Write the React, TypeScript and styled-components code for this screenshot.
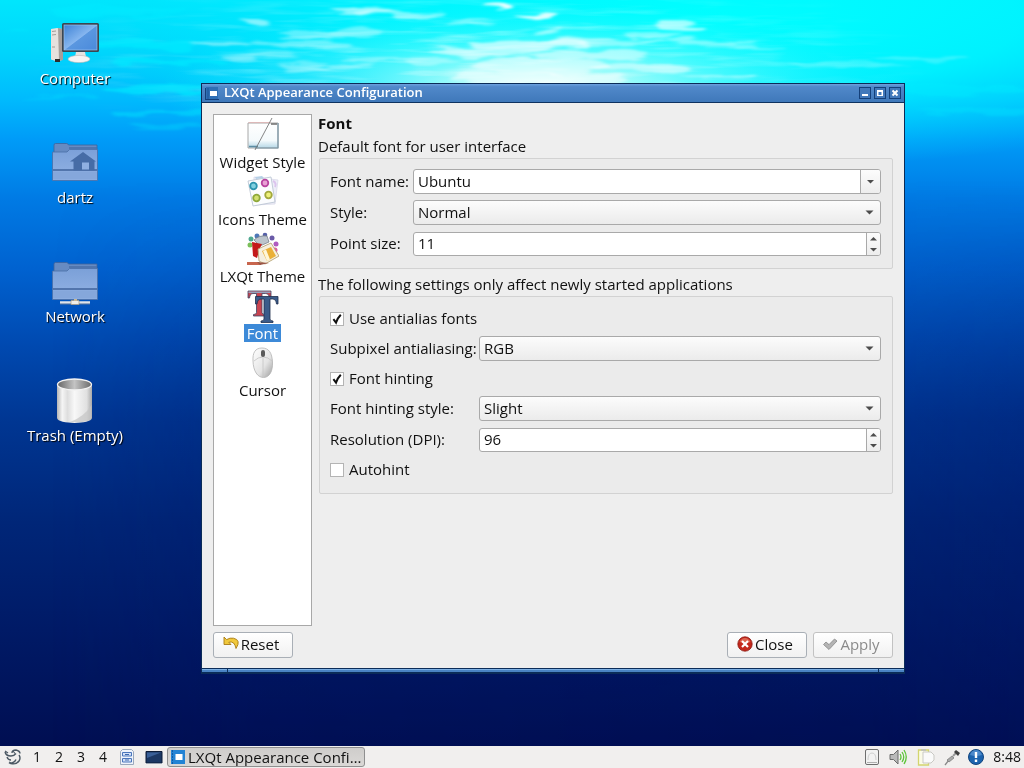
import React, { useId, useState } from "react";
import styled, { createGlobalStyle, css } from "styled-components";

const GlobalStyle = createGlobalStyle`
  * { box-sizing: border-box; }
  html, body { margin: 0; padding: 0; }
  body, button, input, select {
    font-family: "Open Sans", "Noto Sans", sans-serif;
    font-size: 15px;
    line-height: 20px;
    color: #111;
  }
  button, input, select { margin: 0; }
`;

const Desktop = styled.div`
  position: relative;
  display: flex;
  flex-direction: column;
  min-height: 100vh;
  overflow: hidden;
  background: #001058;
`;

const WallpaperArt = styled.svg`
  position: absolute;
  inset: 0;
  width: 100%;
  height: 100%;
`;

const Workspace = styled.main`
  position: relative;
  flex: 1;
`;

/* Desktop shortcuts */

const Shortcuts = styled.nav`
  display: flex;
  flex-direction: column;
  align-items: center;
  width: 150px;
  padding-top: 18px;
  gap: 46px;
`;

const Shortcut = styled.a`
  display: flex;
  flex-direction: column;
  align-items: center;
  color: #fff;
  text-decoration: none;
  text-shadow: 1px 1px 1px #000;
  white-space: nowrap;
  height: 73px;
`;

const ShortcutArt = styled.svg`
  width: 50px;
  height: 50px;
`;

/* Window frame */

const Window = styled.section`
  position: absolute;
  left: 201px;
  right: 119px;
  top: 83px;
  bottom: 72px;
  display: flex;
  flex-direction: column;
  border: 1px solid #0b2c58;
  background: #eeeeee;
`;

const TitleBar = styled.header`
  display: flex;
  align-items: center;
  gap: 3px;
  height: 19px;
  padding: 0 3px;
  border-bottom: 1px solid #0e3260;
  background: linear-gradient(#6ba1de, #5189ca 15%, #3f78ba);
`;

const TitleText = styled.h1`
  flex: 1;
  margin: 0;
  padding: 0 0 2px 1px;
  font-size: 13px;
  line-height: 16px;
  font-weight: 600;
  color: #fff;
`;

const SystemMenu = styled.button`
  display: flex;
  width: 15px;
  height: 13px;
  padding: 0;
  border: 0;
  background: none;
`;

const FrameButton = styled.button`
  display: flex;
  width: 12px;
  height: 12px;
  padding: 0;
  border: 1px solid #14407a;
  background: #4279bb;
`;

const FrameGrip = styled.div`
  display: grid;
  grid-template-columns: 25px 1fr 25px;
  gap: 1px;
  height: 5px;
  padding-bottom: 1px;
  border-top: 1px solid #0b2c58;
  background: #0b2c58;
`;

const GripPart = styled.span`
  border-top: 1px solid #7db0e4;
  background: #4a83c4;
`;

const WindowBody = styled.div`
  flex: 1;
  display: flex;
  flex-direction: column;
  gap: 6px;
  padding: 11px 11px 10px 11px;
`;

const Columns = styled.div`
  flex: 1;
  display: flex;
  gap: 6px;
`;

/* Page list */

const PageList = styled.nav`
  display: flex;
  flex-direction: column;
  gap: 1px;
  width: 99px;
  padding-top: 3px;
  border: 1px solid #a8a8a8;
  background: #fff;
`;

const PageItem = styled.button`
  display: flex;
  flex-direction: column;
  align-items: center;
  gap: 1px;
  height: 56px;
  padding: 0;
  border: 0;
  background: none;
  white-space: nowrap;
`;

const PageArt = styled.svg`
  width: 32px;
  height: 34px;
`;

const PageLabel = styled.span<{ $current?: boolean }>`
  padding: 0 3px;
  line-height: 18px;
  font-size: 15px;
  ${({ $current }) =>
    $current &&
    css`
      background: #3d8ad8;
      color: #fff;
    `}
`;

/* Settings form */

const Settings = styled.form`
  flex: 1;
  min-width: 0;
`;

const PageTitle = styled.h2`
  margin: 0 0 5px;
  font-size: 15px;
  line-height: 18px;
  font-weight: 700;
`;

const Fieldset = styled.fieldset`
  min-width: 0;
  margin: 0 0 6px;
  padding: 0;
  border: 0;
`;

const GroupTitle = styled.legend`
  padding: 0 0 2px;
  line-height: 18px;
`;

const GroupBox = styled.div<{ $labelWidth: number }>`
  display: grid;
  grid-template-columns: ${({ $labelWidth }) => $labelWidth}px 1fr;
  align-items: center;
  row-gap: 6px;
  margin: 1px 0 0 1px;
  padding: 10px 11px 12px 10px;
  border: 1px solid #d2d2d2;
  border-radius: 2px;
  background: #ebebeb;
`;

const FieldLabel = styled.label`
  padding-bottom: 2px;
  white-space: nowrap;
`;

const FieldFrame = styled.div<{ $kind: "choice" | "combo" | "spin" }>`
  position: relative;
  display: flex;
  height: ${({ $kind }) => ($kind === "spin" ? 24 : 25)}px;
  margin-top: ${({ $kind }) => ($kind === "spin" ? 1 : 0)}px;
  min-width: 0;
  border: 1px solid #a9a9a9;
  border-radius: 3px;
  overflow: hidden;
  background: ${({ $kind }) => ($kind === "choice" ? "linear-gradient(#fcfcfc, #ebebeb)" : "#fff")};
`;

const TextInput = styled.input`
  flex: 1;
  min-width: 0;
  padding: 0 4px 2px;
  border: 0;
  outline: 0;
  background: none;
`;

const Choice = styled.select`
  flex: 1;
  appearance: none;
  padding: 0 4px 2px;
  border: 0;
  outline: 0;
  background: none;
`;

const ChoiceArrow = styled.svg`
  position: absolute;
  right: 6px;
  top: 9px;
  width: 9px;
  height: 5px;
  pointer-events: none;
`;

const DropButton = styled.button`
  display: flex;
  align-items: center;
  justify-content: center;
  width: 20px;
  padding: 0;
  border: 0;
  border-left: 1px solid #a9a9a9;
  background: linear-gradient(#fcfcfc, #ededed);
`;

const Steps = styled.div`
  display: flex;
  flex-direction: column;
  width: 14px;
  border-left: 1px solid #a9a9a9;
  background: linear-gradient(#fcfcfc, #ededed);
`;

const StepButton = styled.button`
  flex: 1;
  display: flex;
  align-items: center;
  justify-content: center;
  padding: 0;
  border: 0;
  background: none;
`;

const ArrowArt = styled.svg`
  width: 9px;
  height: 5px;
`;

const CheckRow = styled.label`
  grid-column: 1 / -1;
  display: flex;
  align-items: center;
  gap: 5px;
  height: 23px;
`;

const CheckText = styled.span`
  padding-bottom: 2px;
`;

const CheckBox = styled.span`
  position: relative;
  display: flex;
`;

const CheckInput = styled.input`
  appearance: none;
  width: 14px;
  height: 14px;
  border: 1px solid #b4b4b4;
  background: #fff;
`;

const CheckMark = styled.svg`
  position: absolute;
  inset: 0;
  width: 14px;
  height: 14px;
  pointer-events: none;
`;

/* Dialog buttons */

const ButtonRow = styled.footer`
  display: flex;
  justify-content: space-between;
`;

const ButtonGroup = styled.div`
  display: flex;
  gap: 6px;
`;

const PushButton = styled.button`
  display: flex;
  align-items: center;
  justify-content: center;
  gap: 2px;
  width: 80px;
  height: 26px;
  padding: 0 4px 2px 0;
  border: 1px solid #a9afb6;
  border-radius: 3px;
  background: linear-gradient(#ffffff, #f1f1f1);
  &:disabled {
    border-color: #c2c2c2;
    color: #8b8b8b;
  }
`;

const ButtonArt = styled.svg`
  width: 16px;
  height: 16px;
`;

/* Panel */

const Panel = styled.footer`
  position: relative;
  display: flex;
  align-items: center;
  height: 22px;
  padding-right: 3px;
  background: #f1efee;
`;

const PanelButton = styled.button<{ $width: number }>`
  display: flex;
  align-items: center;
  justify-content: center;
  width: ${({ $width }) => $width}px;
  height: 22px;
  padding: 0;
  border: 0;
  background: none;
`;

const PanelDigit = styled.span`
  font-size: 14px;
`;

const PanelArt = styled.svg`
  width: 18px;
  height: 18px;
`;

const TaskButton = styled.button`
  display: flex;
  align-items: center;
  gap: 2px;
  width: 198px;
  height: 20px;
  padding: 0 2px;
  border: 1px solid #8f8f8f;
  border-radius: 3px;
  background: linear-gradient(#cfcdcb, #dad8d6);
  overflow: hidden;
`;

const TaskText = styled.span`
  white-space: nowrap;
`;

const Tray = styled.div`
  display: flex;
  align-items: center;
  margin-left: auto;
`;

const Clock = styled.time`
  padding-left: 3px;
  font-size: 14px;
`;

/* Small glyphs */

const DownArrow = () => (
  <ArrowArt viewBox="0 0 9 5" aria-hidden="true">
    <path d="M1 1h7L4.500 4.500z" fill="#4c4c4c" />
  </ArrowArt>
);

const UpArrow = () => (
  <ArrowArt viewBox="0 0 9 5" aria-hidden="true">
    <path d="M1 4.500h7L4.500 1z" fill="#4c4c4c" />
  </ArrowArt>
);

/* Form controls */

function SelectField({ label, options }: { label: string; options: string[] }) {
  const id = useId();
  return (
    <>
      <FieldLabel htmlFor={id}>{label}</FieldLabel>
      <FieldFrame $kind="choice">
        <Choice id={id} defaultValue={options[0]}>
          {options.map((o) => (
            <option key={o}>{o}</option>
          ))}
        </Choice>
        <ChoiceArrow viewBox="0 0 9 5" aria-hidden="true">
          <path d="M0.500 0.500h8L4.500 4.500z" fill="#4c4c4c" />
        </ChoiceArrow>
      </FieldFrame>
    </>
  );
}

function SpinField({ label, initial }: { label: string; initial: number }) {
  const id = useId();
  const [value, setValue] = useState(initial);
  return (
    <>
      <FieldLabel htmlFor={id}>{label}</FieldLabel>
      <FieldFrame $kind="spin">
        <TextInput
          id={id}
          inputMode="numeric"
          value={value}
          onChange={(e) => setValue(Number(e.target.value) || 0)}
        />
        <Steps>
          <StepButton type="button" aria-label={`Increase ${label}`} onClick={() => setValue(value + 1)}>
            <UpArrow />
          </StepButton>
          <StepButton type="button" aria-label={`Decrease ${label}`} onClick={() => setValue(value - 1)}>
            <DownArrow />
          </StepButton>
        </Steps>
      </FieldFrame>
    </>
  );
}

function ComboField({ label, initial }: { label: string; initial: string }) {
  const id = useId();
  return (
    <>
      <FieldLabel htmlFor={id}>{label}</FieldLabel>
      <FieldFrame $kind="combo">
        <TextInput id={id} defaultValue={initial} />
        <DropButton type="button" aria-label="Choose font">
          <DownArrow />
        </DropButton>
      </FieldFrame>
    </>
  );
}

function CheckField({ label, initial }: { label: string; initial?: boolean }) {
  const [on, setOn] = useState(!!initial);
  return (
    <CheckRow>
      <CheckBox>
        <CheckInput type="checkbox" checked={on} onChange={() => setOn(!on)} />
        {on && (
          <CheckMark viewBox="0 0 14 14">
            <path d="M3.4 7.2 6 10.6Q7.6 6 10.8 2.8" fill="none" stroke="#111" strokeWidth="2" />
          </CheckMark>
        )}
      </CheckBox>
      <CheckText>{label}</CheckText>
    </CheckRow>
  );
}

/* Drawings */

const streaks: [number, number, number, number, number][] = [
  [497, 5, 14, 2.5, 0.9], [536, 15, 22, 3, 0.85], [366, 12, 30, 3, 0.5], [400, 14, 46, 3, 0.45],
  [345, 9, 14, 2, 0.5], [256, 22, 14, 2, 0.5], [680, 27, 24, 2.5, 0.6], [548, 32, 18, 2, 0.5],
  [470, 24, 26, 2, 0.35], [330, 34, 55, 4, 0.35], [300, 43, 50, 3, 0.35], [222, 45, 30, 3, 0.35],
  [600, 42, 50, 4, 0.4], [655, 35, 30, 3, 0.4], [700, 42, 60, 2.5, 0.4], [745, 47, 40, 2, 0.35],
  [530, 45, 60, 5, 0.6], [480, 52, 50, 4, 0.5], [590, 55, 60, 4, 0.5], [400, 60, 60, 3, 0.35],
  [330, 67, 50, 3, 0.3], [260, 56, 40, 3, 0.3], [720, 77, 40, 2, 0.45], [640, 68, 50, 4, 0.45],
  [540, 66, 70, 8, 0.5], [540, 79, 90, 7, 0.5], [850, 65, 60, 2, 0.2], [920, 58, 50, 2, 0.2],
];

const cyanStreaks: [number, number, number, number, number][] = [
  [170, 62, 60, 3, 0.6], [150, 44, 60, 4, 0.6], [160, 88, 60, 4, 0.6], [60, 98, 40, 2, 0.25],
  [160, 112, 50, 3, 0.4], [170, 126, 40, 2, 0.3], [20, 33, 14, 1, 0.5], [950, 90, 80, 5, 0.4],
  [980, 112, 60, 4, 0.3], [120, 12, 70, 5, 0.5], [80, 76, 40, 2, 0.3],
];

const Wallpaper = () => (
  <WallpaperArt viewBox="0 0 1024 768" preserveAspectRatio="none" aria-hidden="true">
    <defs>
      <linearGradient id="sea" x1="0" y1="0" x2="0" y2="1">
        <stop offset="0" stopColor="#00e6fd" />
        <stop offset="0.07" stopColor="#00d4fc" />
        <stop offset="0.13" stopColor="#00bafd" />
        <stop offset="0.18" stopColor="#009cf8" />
        <stop offset="0.26" stopColor="#007ae4" />
        <stop offset="0.35" stopColor="#0062d0" />
        <stop offset="0.45" stopColor="#0049b0" />
        <stop offset="0.55" stopColor="#003692" />
        <stop offset="0.68" stopColor="#002678" />
        <stop offset="0.82" stopColor="#001a66" />
        <stop offset="1" stopColor="#000c4e" />
      </linearGradient>
      <radialGradient id="glow" gradientUnits="userSpaceOnUse" cx="0" cy="0" r="1" gradientTransform="translate(540 88) scale(380 88)">
        <stop offset="0" stopColor="#f0fffc" />
        <stop offset="0.2" stopColor="#c0fefa" stopOpacity="0.9" />
        <stop offset="0.5" stopColor="#70fdfd" stopOpacity="0.6" />
        <stop offset="1" stopColor="#00f4ff" stopOpacity="0" />
      </radialGradient>
      <radialGradient id="cyan" gradientUnits="userSpaceOnUse" cx="0" cy="0" r="1" gradientTransform="translate(700 20) scale(640 150)">
        <stop offset="0" stopColor="#00ffff" />
        <stop offset="0.5" stopColor="#00f8ff" stopOpacity="0.8" />
        <stop offset="1" stopColor="#00e0ff" stopOpacity="0" />
      </radialGradient>
      <radialGradient id="rippleFade" gradientUnits="userSpaceOnUse" cx="0" cy="0" r="1" gradientTransform="translate(480 60) scale(460 90)">
        <stop offset="0" stopColor="#fff" />
        <stop offset="0.5" stopColor="#888" />
        <stop offset="1" stopColor="#000" />
      </radialGradient>
      <linearGradient id="shade" x1="0" y1="0" x2="0" y2="1">
        <stop offset="0" stopColor="#001060" stopOpacity="0" />
        <stop offset="0.4" stopColor="#001060" stopOpacity="0.4" />
        <stop offset="1" stopColor="#001060" stopOpacity="0.3" />
      </linearGradient>
      <linearGradient id="shadeAcross" x1="0" y1="0" x2="1" y2="0">
        <stop offset="0.05" stopColor="#000" />
        <stop offset="0.25" stopColor="#999" />
        <stop offset="0.85" stopColor="#666" />
        <stop offset="1" stopColor="#bbb" />
      </linearGradient>
      <filter id="soft" x="-20%" y="-100%" width="140%" height="300%">
        <feTurbulence type="fractalNoise" baseFrequency="0.02 0.12" numOctaves="2" seed="4" result="n" />
        <feDisplacementMap in="SourceGraphic" in2="n" scale="16" result="d" />
        <feGaussianBlur in="d" stdDeviation="2 0.8" />
      </filter>
      <filter id="ripples" x="0" y="0" width="100%" height="100%">
        <feTurbulence type="fractalNoise" baseFrequency="0.014 0.13" numOctaves="3" seed="11" />
        <feColorMatrix values="0 0 0 0 0.85  0 0 0 0 1  0 0 0 0 1  2.6 0 0 0 -1.2" />
      </filter>
      <mask id="rippleMask">
        <rect width="1024" height="160" fill="url(#rippleFade)" />
      </mask>
      <mask id="shadeMask">
        <rect width="1024" height="768" fill="url(#shadeAcross)" />
      </mask>
    </defs>
    <rect width="1024" height="768" fill="url(#sea)" />
    <g mask="url(#shadeMask)">
      <rect y="180" width="1024" height="588" fill="url(#shade)" />
    </g>
    <rect width="1024" height="200" fill="url(#cyan)" />
    <rect width="1024" height="220" fill="url(#glow)" />
    <g mask="url(#rippleMask)">
      <rect width="1024" height="160" filter="url(#ripples)" opacity="0.5" />
    </g>
    <g fill="#00ecff" filter="url(#soft)">
      {cyanStreaks.map(([x, y, rx, ry, o]) => (
        <ellipse key={`${x}-${y}`} cx={x} cy={y} rx={rx} ry={ry} opacity={o} />
      ))}
    </g>
    <g fill="#fff" filter="url(#soft)">
      {streaks.map(([x, y, rx, ry, o]) => (
        <ellipse key={`${x}-${y}`} cx={x} cy={y} rx={rx} ry={ry} opacity={o} />
      ))}
    </g>
  </WallpaperArt>
);

const ComputerIcon = () => (
  <ShortcutArt viewBox="0 0 50 50" aria-hidden="true">
    <defs>
      <linearGradient id="screen" x1="0" y1="0" x2="1" y2="1">
        <stop offset="0" stopColor="#3f83d6" />
        <stop offset="0.5" stopColor="#86b6ef" />
        <stop offset="0.52" stopColor="#5a97e0" />
        <stop offset="1" stopColor="#4a8adb" />
      </linearGradient>
    </defs>
    <path d="M1 11 7 10l5 1v31l-5 1.500-6-2z" fill="#e6e1de" />
    <path d="M8 10l1 33 4-1V11z" fill="#a79f9b" />
    <path d="M2 13.500l4-.5M2 17l4-.5M2 29h3" stroke="#a39c98" strokeWidth="1" />
    <path d="M5 41h5v3H5z" fill="#2e2b2b" />
    <path d="M26 34h9l1 5H25z" fill="#e6e3e1" />
    <ellipse cx="29" cy="41" rx="11" ry="3.600" fill="#f6f4f3" stroke="#c2b9b5" strokeWidth="0.6" />
    <rect x="12" y="5" width="37" height="29" rx="1.500" fill="#3a4753" />
    <rect x="14" y="7" width="33" height="25" fill="url(#screen)" stroke="#a5c8f0" strokeWidth="0.6" />
  </ShortcutArt>
);

const FolderShape = ({ children }: { children: React.ReactNode }) => (
  <ShortcutArt viewBox="0 0 50 50" aria-hidden="true">
    <defs>
      <linearGradient id="folder" x1="0" y1="0" x2="0" y2="1">
        <stop offset="0" stopColor="#7ba0d8" />
        <stop offset="1" stopColor="#93b3e4" />
      </linearGradient>
    </defs>
    <path d="M4 8q0-1.500 1.500-1.500h11q1.500 0 2 1.500H47v8H4z" fill="#668bc2" stroke="#3f639b" strokeWidth="0.8" />
    <path d="M19 11h28" stroke="#4a6ea6" strokeWidth="1.500" />
    <path d="M2.500 15H17l2.500-2.500H47.500v31H2.500z" fill="url(#folder)" stroke="#4a6ea6" strokeWidth="0.8" />
    <path d="M3 33h44" stroke="#3f639b" strokeWidth="1.300" />
    <path d="M3 34.500h44v8H3z" fill="#85a7db" />
    {children}
  </ShortcutArt>
);

const HomeFolderIcon = () => (
  <FolderShape>
    <path d="M33 15 20 24.500h3.500V33.500h21v-9H46z" fill="#466ca6" />
    <path d="M32 25.500h7v7h-7z" fill="#8fb0e2" />
  </FolderShape>
);

const NetworkFolderIcon = () => (
  <FolderShape>
    <path d="M10 46.500h30" stroke="#dfe4ea" strokeWidth="2.500" />
    <path d="M10 48h30" stroke="#6f7e94" strokeWidth="0.8" />
    <path d="M21 44.500h8v4h-8z" fill="#f0eeea" stroke="#a79a80" strokeWidth="0.7" />
    <path d="M24 43h3v2h-3z" fill="#c9b894" />
  </FolderShape>
);

const TrashIcon = () => (
  <ShortcutArt viewBox="0 0 50 50" aria-hidden="true">
    <defs>
      <linearGradient id="can" x1="0" y1="0" x2="1" y2="0">
        <stop offset="0" stopColor="#b5b5b5" />
        <stop offset="0.15" stopColor="#f5f5f5" />
        <stop offset="0.3" stopColor="#dedede" />
        <stop offset="0.5" stopColor="#f8f8f8" />
        <stop offset="0.85" stopColor="#e0e0e0" />
        <stop offset="1" stopColor="#a9a9a9" />
      </linearGradient>
      <linearGradient id="canInside" x1="0" y1="0" x2="1" y2="0">
        <stop offset="0" stopColor="#666" />
        <stop offset="0.5" stopColor="#c4c4c4" />
        <stop offset="1" stopColor="#6a6a6a" />
      </linearGradient>
    </defs>
    <path d="M7 9v34c1 6.500 34 6.500 35 0V9z" fill="url(#can)" />
    <path d="M20 47Q34 42 41.500 30v13c-1 3-9 5-21.500 4z" fill="#c4c4c4" opacity="0.7" />
    <ellipse cx="24.500" cy="9.500" rx="17" ry="5.500" fill="url(#canInside)" stroke="#f2f2f2" strokeWidth="1.300" />
  </ShortcutArt>
);

const WidgetStyleIcon = () => (
  <PageArt viewBox="0 0 32 34">
    <defs>
      <linearGradient id="pane" x1="0" y1="0" x2="0" y2="1">
        <stop offset="0" stopColor="#ffffff" />
        <stop offset="0.7" stopColor="#f4fafc" />
        <stop offset="1" stopColor="#b5d7e6" />
      </linearGradient>
    </defs>
    <path d="M1 5h30v25H1z" fill="url(#pane)" stroke="#a8a8a8" />
    <path d="M31 5v25H8" fill="none" stroke="#7896a6" strokeWidth="1.200" />
    <path d="M1.500 4.500h22" stroke="#dcb8b8" />
    <path d="M24 6h6" stroke="#6d6d6d" strokeWidth="1.500" />
    <path d="M2 28.500h9" stroke="#5c8da4" strokeWidth="1.500" />
    <path d="M25 0 8 32" stroke="#777" strokeWidth="0.9" />
  </PageArt>
);

const IconsThemeIcon = () => (
  <PageArt viewBox="0 0 32 34">
    <path d="M7 2l24 3-3 24-21 1z" fill="#eeeef8" stroke="#d6d6e6" strokeWidth="0.7" />
    <path d="M1 6l23-4 4 25-22 4z" fill="#fbfcfe" stroke="#b5c0cf" strokeWidth="0.8" />
    <path d="M8 2l7-1 2 2-8 1z" fill="#b6d0e6" />
    <g strokeWidth="1.800">
      <circle cx="6.500" cy="11" r="3.300" fill="#7fd0e0" stroke="#2b93ae" />
      <circle cx="18" cy="8" r="3.300" fill="#e8a0d4" stroke="#b845a0" />
      <circle cx="9.500" cy="23" r="3.300" fill="#d2e070" stroke="#8ea83a" />
      <circle cx="21.500" cy="20" r="3.300" fill="#eef07a" stroke="#a2a83c" />
    </g>
    <path d="M26 6q4 2 2 6" fill="none" stroke="#dcc4ee" strokeWidth="2" />
  </PageArt>
);

const LxqtThemeIcon = () => (
  <PageArt viewBox="0 0 32 34">
    <circle cx="3" cy="13" r="2.500" fill="#7bbf5a" />
    <circle cx="4" cy="7" r="2.500" fill="#4fa890" />
    <circle cx="10" cy="4" r="2.500" fill="#4f78b8" />
    <circle cx="18" cy="3" r="2.300" fill="#5560a8" />
    <circle cx="25" cy="6" r="2.500" fill="#6a5aa8" />
    <circle cx="29" cy="12" r="2.500" fill="#b05ac0" />
    <circle cx="28" cy="18" r="2.500" fill="#e05aa0" />
    <path d="M7 8q5-5 13-4l2 6-9 4z" fill="#bcc4cc" stroke="#6d7680" strokeWidth="0.7" />
    <path d="M5 10l10 2-2 4-3 10-4-2z" fill="#c41a1a" />
    <path d="M0 30h12l2 3H0z" fill="#c8664e" />
    <path d="M11 17l13-6 8 13-14 8-6-3z" fill="#f5efe0" stroke="#b09a66" strokeWidth="0.8" />
    <path d="M15 19l9-4 5 9-9 5z" fill="#eab038" />
    <path d="M16 19l3-1.500 4 10-3 1.500z" fill="#fff6d8" />
    <path d="M10 30l12 1-9 2z" fill="#9a5544" />
  </PageArt>
);

const FontIcon = () => (
  <PageArt viewBox="0 0 32 34">
    <path
      d="M1 2h23v7h-1.500q-.5-4.500-4-4.500h-3.500v19q0 2 3 2v1.500H6.500v-1.500q3 0 3-2v-19H6q-3 0-3.500 4.500H1z"
      fill="#c84450"
      stroke="#3c4664"
      strokeWidth="0.8"
    />
    <path d="M1.500 2.500h22v1.500h-22z" fill="#98a2bc" />
    <path
      d="M8.500 7.500H31V15h-1.500q-.5-5-4-5H23v20q0 2 3 2v1.500H14v-1.500q3 0 3-2V10h-3q-3.500 0-4 5H8.500z"
      fill="#3b5c8a"
      stroke="#1e2e4c"
      strokeWidth="0.8"
    />
  </PageArt>
);

const CursorIcon = () => (
  <PageArt viewBox="0 0 32 34">
    <defs>
      <linearGradient id="mouse" x1="0" y1="0" x2="1" y2="1">
        <stop offset="0" stopColor="#ffffff" />
        <stop offset="0.6" stopColor="#e4e4e4" />
        <stop offset="1" stopColor="#9c9c9c" />
      </linearGradient>
    </defs>
    <path
      d="M15 2C8 2 5.500 7 6 15c.3 10 4.500 16.500 10.500 16.500S26 25 25.500 16C25 7 22 2 15 2z"
      fill="url(#mouse)"
      stroke="#b4b4b4"
      strokeWidth="0.8"
    />
    <path d="M7 15q4-4 9-4t9 4M16 12v19" fill="none" stroke="#c4c4c4" strokeWidth="0.8" />
    <rect x="14" y="4" width="4" height="7" rx="2" fill="#5a5a5a" />
  </PageArt>
);

const MenuArt = () => (
  <svg width="15" height="13" viewBox="0 0 15 13" aria-hidden="true">
    <path d="M1 0h12v12H1z" fill="#2f6fb5" />
    <path d="M0 12.500h14M0.500 1v11" stroke="#163f78" />
    <path d="M3 1v11" stroke="#1c5496" />
    <path d="M5 4h7v5H5z" fill="#fff" />
  </svg>
);

const pages = [
  { label: "Widget Style", Icon: WidgetStyleIcon },
  { label: "Icons Theme", Icon: IconsThemeIcon },
  { label: "LXQt Theme", Icon: LxqtThemeIcon },
  { label: "Font", Icon: FontIcon },
  { label: "Cursor", Icon: CursorIcon },
];

const shortcuts = [
  { label: "Computer", Icon: ComputerIcon },
  { label: "dartz", Icon: HomeFolderIcon },
  { label: "Network", Icon: NetworkFolderIcon },
  { label: "Trash (Empty)", Icon: TrashIcon },
];

export default function App() {
  const [page, setPage] = useState("Font");
  return (
    <Desktop>
      <GlobalStyle />
      <Wallpaper />
      <Workspace>
        <Shortcuts>
          {shortcuts.map(({ label, Icon }) => (
            <Shortcut key={label} href="#">
              <Icon />
              <span>{label}</span>
            </Shortcut>
          ))}
        </Shortcuts>

        <Window>
          <TitleBar>
            <SystemMenu aria-label="Window menu">
              <MenuArt />
            </SystemMenu>
            <TitleText>LXQt Appearance Configuration</TitleText>
            <FrameButton aria-label="Minimize">
              <svg width="10" height="10" viewBox="0 0 10 10">
                <path d="M2 7h6" stroke="#fff" strokeWidth="2" />
              </svg>
            </FrameButton>
            <FrameButton aria-label="Maximize">
              <svg width="10" height="10" viewBox="0 0 10 10">
                <path d="M2 2h6v6H2zM3.500 4v3h3V4z" fill="#fff" fillRule="evenodd" />
              </svg>
            </FrameButton>
            <FrameButton aria-label="Close window">
              <svg width="10" height="10" viewBox="0 0 10 10">
                <path d="M2.500 2.500l5 5M7.500 2.500l-5 5" stroke="#fff" strokeWidth="2" />
              </svg>
            </FrameButton>
          </TitleBar>

          <WindowBody>
            <Columns>
              <PageList>
                {pages.map(({ label, Icon }) => (
                  <PageItem key={label} onClick={() => setPage(label)}>
                    <Icon />
                    <PageLabel $current={label === page}>{label}</PageLabel>
                  </PageItem>
                ))}
              </PageList>

              <Settings onSubmit={(e) => e.preventDefault()}>
                <PageTitle>Font</PageTitle>
                <Fieldset>
                  <GroupTitle>Default font for user interface</GroupTitle>
                  <GroupBox $labelWidth={83}>
                    <ComboField label="Font name:" initial="Ubuntu" />
                    <SelectField label="Style:" options={["Normal", "Bold", "Italic"]} />
                    <SpinField label="Point size:" initial={11} />
                  </GroupBox>
                </Fieldset>
                <Fieldset>
                  <GroupTitle>The following settings only affect newly started applications</GroupTitle>
                  <GroupBox $labelWidth={149}>
                    <CheckField label="Use antialias fonts" initial />
                    <SelectField label="Subpixel antialiasing:" options={["RGB", "BGR", "None"]} />
                    <CheckField label="Font hinting" initial />
                    <SelectField label="Font hinting style:" options={["Slight", "Medium", "Full"]} />
                    <SpinField label="Resolution (DPI):" initial={96} />
                    <CheckField label="Autohint" />
                  </GroupBox>
                </Fieldset>
              </Settings>
            </Columns>

            <ButtonRow>
              <PushButton>
                <ButtonArt viewBox="0 0 16 16">
                  <path
                    d="M1 1v7.500h7L5.800 6.300Q11.500 4.500 13 12.500 18.500 4 10.500 2.200 7 1.500 3.600 3.600z"
                    fill="#f0c83c"
                    stroke="#a87c14"
                    strokeWidth="0.9"
                  />
                </ButtonArt>
                Reset
              </PushButton>
              <ButtonGroup>
                <PushButton>
                  <ButtonArt viewBox="0 0 16 16">
                    <circle cx="8" cy="8" r="7.200" fill="#c4281c" stroke="#8a1810" strokeWidth="0.8" />
                    <path d="M2.500 6q2-4 5.500-4t5.500 4q-5 2-11 0z" fill="#e8806a" opacity="0.7" />
                    <path d="M5 5l6 6M11 5l-6 6" stroke="#fff" strokeWidth="2.200" />
                  </ButtonArt>
                  Close
                </PushButton>
                <PushButton disabled>
                  <ButtonArt viewBox="0 0 16 16">
                    <path
                      d="M1.500 8.500 4 6l3 2.600L12.500 3 15 5l-8 8.500z"
                      fill="#b4b4b4"
                      stroke="#888"
                      strokeWidth="0.8"
                    />
                  </ButtonArt>
                  Apply
                </PushButton>
              </ButtonGroup>
            </ButtonRow>
          </WindowBody>

          <FrameGrip>
            <GripPart />
            <GripPart />
            <GripPart />
          </FrameGrip>
        </Window>
      </Workspace>

      <Panel>
        <PanelButton $width={26} aria-label="Main menu">
          <PanelArt viewBox="0 0 18 18">
            <path
              d="M1 4q1 4 6 4 3 0 5-2.500M8 5q0-3 4-3 4 1 4 3.500M15 7q2 3 0 6-3 4-8 2.500 4-1 5-4M3 9q1 3 4 3"
              fill="none"
              stroke="#4b5863"
              strokeWidth="1.400"
            />
            <path d="M1 3l3 2M5 14l3 1.500M9 3l2 2.500" stroke="#4b5863" strokeWidth="1.200" />
          </PanelArt>
        </PanelButton>
        {["1", "2", "3", "4"].map((n) => (
          <PanelButton key={n} $width={22} aria-label={`Desktop ${n}`}>
            <PanelDigit>{n}</PanelDigit>
          </PanelButton>
        ))}
        <PanelButton $width={26} aria-label="File manager">
          <PanelArt viewBox="0 0 18 18">
            <path d="M2.500 3.500l2-2h9l2 2v13h-13z" fill="#eef3fb" stroke="#9aa8bc" />
            <path d="M4.500 4.500h9V8h-9zM4.500 10.500h9V14h-9z" fill="#d3e1f7" stroke="#4a76bc" />
            <path d="M7 6.500h4M7 12h4" stroke="#3c68ae" />
          </PanelArt>
        </PanelButton>
        <PanelButton $width={27} aria-label="Show desktop">
          <PanelArt viewBox="0 0 18 18">
            <path d="M1 3.500h16v11.500H1z" fill="#1c3864" stroke="#0d1d38" />
            <path d="M2 4.500h14L2 10z" fill="#3a6098" />
            <path d="M1 15.500h16" stroke="#9aa3b0" />
          </PanelArt>
        </PanelButton>
        <TaskButton>
          <ButtonArt viewBox="0 0 16 16">
            <path d="M1 1h14v14H1z" fill="#2383d4" />
            <path d="M2.500 1v14" stroke="#0f5aa4" strokeDasharray="2 1" />
            <path d="M5.500 5h7v6h-7z" fill="#fff" />
          </ButtonArt>
          <TaskText>LXQt Appearance Confi…</TaskText>
        </TaskButton>
        <Tray>
          <PanelButton $width={24} aria-label="Removable media">
            <PanelArt viewBox="0 0 18 18">
              <rect x="2.500" y="1.500" width="13" height="15" rx="1.500" fill="#f2f2f2" stroke="#6e6e6e" />
              <path d="M5 12q0-7 4-7t4 7" fill="none" stroke="#cfcfcf" />
              <path d="M4 14.500h10" stroke="#b0b0b0" />
            </PanelArt>
          </PanelButton>
          <PanelButton $width={27} aria-label="Volume">
            <PanelArt viewBox="0 0 18 18">
              <path d="M1 6.500h3.500L9 2v14l-4.500-4.500H1z" fill="#b9b9b9" stroke="#6a6a6a" />
              <path d="M11 6q2 3 0 6M13 4q3.500 5 0 10M15 2q4.500 7 0 14" fill="none" stroke="#5dc43a" strokeWidth="1.300" />
            </PanelArt>
          </PanelButton>
          <PanelButton $width={30} aria-label="Clipboard">
            <PanelArt viewBox="0 0 18 18">
              <path d="M1.500 2h10v15h-10z" fill="#fbfbe8" stroke="#d3d56e" strokeWidth="1.300" />
              <path d="M4 1h5v2H4z" fill="#c4c4b8" />
              <path d="M6 4h8l3 3v5l-3 3H6z" fill="#fafafa" stroke="#c9c9c4" />
            </PanelArt>
          </PanelButton>
          <PanelButton $width={21} aria-label="Network">
            <PanelArt viewBox="0 0 18 18">
              <path d="M2 17l4-5" stroke="#888" strokeWidth="1.300" />
              <path d="M4 12l5-4 2 2-5 4z" fill="#a9a9a9" stroke="#777" strokeWidth="0.7" />
              <path d="M10 8l4-4" stroke="#999" strokeWidth="2" />
              <path d="M11 4l2-2 4 3-2 3z" fill="#3f3f3f" />
            </PanelArt>
          </PanelButton>
          <PanelButton $width={28} aria-label="Notifications">
            <PanelArt viewBox="0 0 18 18">
              <circle cx="9" cy="9" r="7.500" fill="#1c63ae" stroke="#12457e" />
              <path d="M3 7q2-5 6-5t6 5q-6 2-12 0z" fill="#6aa2dc" opacity="0.6" />
              <path d="M9 4v6M9 11.500v2.500" stroke="#fff" strokeWidth="2.400" />
            </PanelArt>
          </PanelButton>
          <Clock>8:48</Clock>
        </Tray>
      </Panel>
    </Desktop>
  );
}
